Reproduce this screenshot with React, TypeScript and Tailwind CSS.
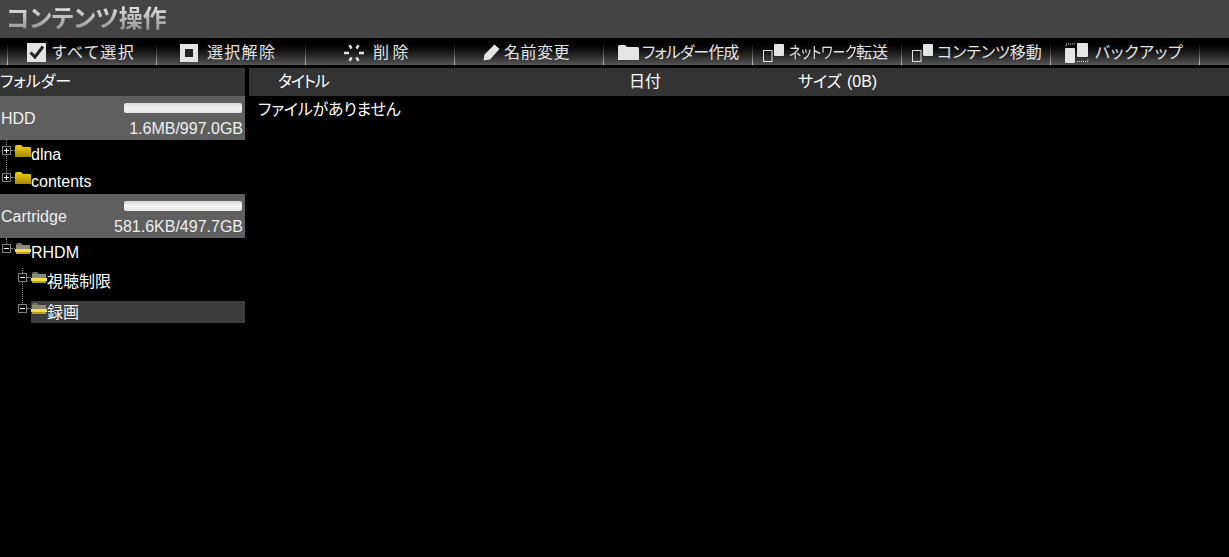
const FONT = "font-['Liberation_Sans','Noto_Sans_CJK_JP',sans-serif] [font-feature-settings:'palt']"

type ToolbarItem = {
  id: string
  label: React.ReactNode
  icon: React.ReactNode
  spacing: string
  tracking: string
}

function CheckIcon() {
  return (
    <svg width="19" height="19" viewBox="0 0 19 19" className="shrink-0">
      <rect width="19" height="19" fill="#e4e4e4" />
      <path d="M3.500 9.500 L8 14 L16 3.500" fill="none" stroke="#222" strokeWidth="3" />
    </svg>
  )
}

function SquareIcon() {
  return (
    <svg width="18" height="18" viewBox="0 0 18 18" className="shrink-0">
      <rect width="18" height="18" fill="#e4e4e4" />
      <rect x="5" y="5" width="8" height="8" fill="#222" />
    </svg>
  )
}

function SpinnerIcon() {
  return (
    <svg width="22" height="20" viewBox="0 0 22 20" className="shrink-0" stroke="#e4e4e4" strokeWidth="2.500">
      <path d="M8.500 5.700 L6.500 2.200 M13.500 5.700 L15.500 2.200 M6 10 H1 M16 10 H21 M8.500 14.300 L6.500 17.800 M13.500 14.300 L15.500 17.800" />
    </svg>
  )
}

function PencilIcon() {
  return (
    <svg width="17" height="17" viewBox="0 0 17 17" className="shrink-0">
      <path d="M11.500 0.500 L16.500 5 L7 15.500 L0.500 16.500 L1.500 10.500 Z" fill="#e4e4e4" />
    </svg>
  )
}

function FolderIcon() {
  return (
    <svg width="21" height="15" viewBox="0 0 21 15" className="shrink-0">
      <path d="M0 1.500 Q0 0 1.500 0 H7 L9 2 H19.500 Q21 2 21 3.500 V15 H0 Z" fill="#e4e4e4" />
    </svg>
  )
}

function TransferIcon() {
  return (
    <svg width="21" height="18" viewBox="0 0 21 18" className="shrink-0">
      <rect x="0.500" y="6.500" width="8.500" height="11" fill="none" stroke="#e4e4e4" />
      <rect x="11" y="0" width="10" height="12" rx="1" fill="#e4e4e4" />
    </svg>
  )
}

function BackupIcon() {
  return (
    <svg width="24" height="20" viewBox="0 0 24 20" className="shrink-0">
      <path d="M1 3 V1 H10" fill="none" stroke="#e4e4e4" strokeDasharray="1 1" />
      <rect x="0" y="5" width="10" height="15" rx="1" fill="#e4e4e4" />
      <rect x="12" y="0" width="11" height="14" rx="1" fill="#e4e4e4" />
      <path d="M12 18.500 H23 V16" fill="none" stroke="#e4e4e4" strokeDasharray="1 1" />
    </svg>
  )
}

const TOOLBAR_ITEMS: ToolbarItem[] = [
  { id: "all", label: "すべて選択", icon: <CheckIcon />, spacing: "pl-[19px] gap-[6px]", tracking: "tracking-[1.500px]" },
  { id: "none", label: "選択解除", icon: <SquareIcon />, spacing: "pl-[23px] gap-[9px]", tracking: "tracking-[1.300px]" },
  { id: "delete", label: "削 除", icon: <SpinnerIcon />, spacing: "pl-[37px] gap-[8px]", tracking: "tracking-[-0.500px]" },
  { id: "rename", label: "名前変更", icon: <PencilIcon />, spacing: "pl-[28px] gap-[4px]", tracking: "tracking-[0.500px]" },
  { id: "mkdir", label: "フォルダー作成", icon: <FolderIcon />, spacing: "pl-[14px] gap-[3px]", tracking: "tracking-[-1px]" },
  {
    id: "network",
    label: (
      <span className="flex">
        <span className="w-[67px]">
          <span className="block origin-left scale-x-[0.8]">ネットワーク</span>
        </span>
        転送
      </span>
    ),
    icon: <TransferIcon />,
    spacing: "pl-[10px] gap-[5px]",
    tracking: "tracking-normal"
  },
  { id: "move", label: "コンテンツ移動", icon: <TransferIcon />, spacing: "pl-[10px] gap-[4px]", tracking: "tracking-normal" },
  { id: "backup", label: "バックアップ", icon: <BackupIcon />, spacing: "pl-[14px] gap-[6px]", tracking: "tracking-[0.700px]" }
]

function TreeFolder({ open }: { open?: boolean }) {
  if (open) {
    return (
      <svg width="16" height="12" viewBox="0 0 16 12" className="shrink-0">
        <path d="M1 2 Q1 0 3 0 H6 L8 2 H15 V6 H1 Z" fill="#777158" />
        <rect x="1" y="2" width="14" height="5" fill="#8c8a78" />
        <rect x="0" y="6" width="16" height="3" fill="#f0e050" />
        <rect x="1" y="9" width="14" height="2" fill="#b8a020" />
      </svg>
    )
  }
  return (
    <svg width="16" height="12" viewBox="0 0 16 12" className="shrink-0">
      <defs>
        <linearGradient id="folder-closed" x1="0" y1="0" x2="0" y2="1">
          <stop offset="0" stopColor="#f5d400" />
          <stop offset="1" stopColor="#a88600" />
        </linearGradient>
      </defs>
      <path d="M0 2 Q0 0 2 0 H6 L8 2 H15 Q16 2 16 3 V12 H0 Z" fill="url(#folder-closed)" />
    </svg>
  )
}

function Expander({ open }: { open?: boolean }) {
  return (
    <span className="relative block h-[9px] w-[9px] shrink-0 border border-[#808080] bg-black">
      <span className="absolute left-[1px] top-[3px] h-[1px] w-[5px] bg-white" />
      {!open && <span className="absolute left-[3px] top-[1px] h-[5px] w-[1px] bg-white" />}
    </span>
  )
}

function StorageCard({ name, usage }: { name: string; usage: string }) {
  return (
    <div className="flex h-[44px] w-[245px] items-start justify-between bg-[#5f5f5f] pl-[1px] pr-[2px] pt-[7px]">
      <span className="mt-[4px] text-[16px] leading-[24px] text-[#f0f0f0]">{name}</span>
      <div className="flex flex-col items-end">
        <div className="mr-[1px] h-[10px] w-[118px] rounded-[2px] bg-gradient-to-b from-[#d8d8d8] via-[#f4f4f4] to-[#e4e4e4]" />
        <span className="mt-[6px] whitespace-nowrap text-[16px] leading-[20px] text-[#eeeeee]">{usage}</span>
      </div>
    </div>
  )
}

type TreeRowProps = {
  label: string
  open?: boolean
  indent: string
  height: string
  line?: string
  selected?: boolean
}

function TreeRow({ label, open, indent, height, line, selected }: TreeRowProps) {
  return (
    <div className={`flex w-[245px] items-start ${height} ${indent}`}>
      <div className="relative mt-[3px] flex items-center">
        {line && <span className={`absolute left-[4px] w-0 border-l border-dotted border-[#909090] ${line}`} />}
        <span className="relative"><Expander open={open} /></span>
        <span className="w-[4px] border-t border-dotted border-[#909090]" />
      </div>
      <div className={`flex h-[22px] flex-1 items-start ${selected ? "bg-[#3d3d3d]" : ""}`}>
        <div className="mt-[2px]"><TreeFolder open={open} /></div>
        <span className="mt-[1px] text-[16px] leading-[22px] text-white">{label}</span>
      </div>
    </div>
  )
}

export default function App() {
  return (
    <div className={`flex h-[557px] w-[1229px] flex-col overflow-hidden bg-black ${FONT}`}>
      <header className="flex h-[38px] items-center bg-[#444444] pl-[6px]">
        <h1 className="bg-gradient-to-b from-[#e8e8e8] to-[#888888] bg-clip-text text-[24px] font-bold leading-[30px] text-transparent">
          コンテンツ操作
        </h1>
      </header>

      <nav className="mt-[2px] flex h-[25px] items-stretch bg-gradient-to-b from-black via-[#1a1a1a] to-[#555555] pl-[7px]">
        {TOOLBAR_ITEMS.map((item) => (
          <div key={item.id} className="flex">
            <span className="w-px bg-gradient-to-b from-black to-[#c0c0c0]" />
            <div className={`flex w-[148px] items-center ${item.spacing} text-[16px] whitespace-nowrap text-[#e4e4e4]`}>
              {item.icon}
              <span className={`mt-[1px] ${item.tracking}`}>{item.label}</span>
            </div>
          </div>
        ))}
        <span className="w-px bg-gradient-to-b from-black to-[#c0c0c0]" />
      </nav>

      <div className="mt-[3px] flex flex-1">
        <aside className="w-[245px]">
          <div className="flex h-[28px] items-center bg-[#333333] text-[16px] text-white">フォルダー</div>
          <StorageCard name="HDD" usage="1.6MB/997.0GB" />
          <TreeRow label="dlna" indent="pl-[2px] pt-[3px]" height="h-[27px]" line="-top-[6px] h-[33px]" />
          <TreeRow label="contents" indent="pl-[2px] pt-[3px]" height="h-[27px]" />
          <StorageCard name="Cartridge" usage="581.6KB/497.7GB" />
          <TreeRow label="RHDM" open indent="pl-[2px] pt-[3px]" height="h-[32px]" line="-top-[6px] h-[6px]" />
          <TreeRow label="視聴制限" open indent="pl-[18px]" height="h-[31px]" line="-top-[5px] h-[35px]" />
          <TreeRow label="録画" open indent="pl-[18px]" height="h-[22px]" selected />
        </aside>

        <main className="ml-[4px] flex-1">
          <div className="flex h-[28px] items-center bg-[#333333] text-[16px] text-white">
            <span className="ml-[29px] w-[351px] tracking-[-1.200px]">タイトル</span>
            <span className="w-[169px]">日付</span>
            <span>サイズ <span className="ml-[1px]">(0B)</span></span>
          </div>
          <p className="ml-[9px] mt-[3px] text-[16px] leading-[22px] tracking-[-0.200px] text-white">ファイルがありません</p>
        </main>
      </div>
    </div>
  )
}
